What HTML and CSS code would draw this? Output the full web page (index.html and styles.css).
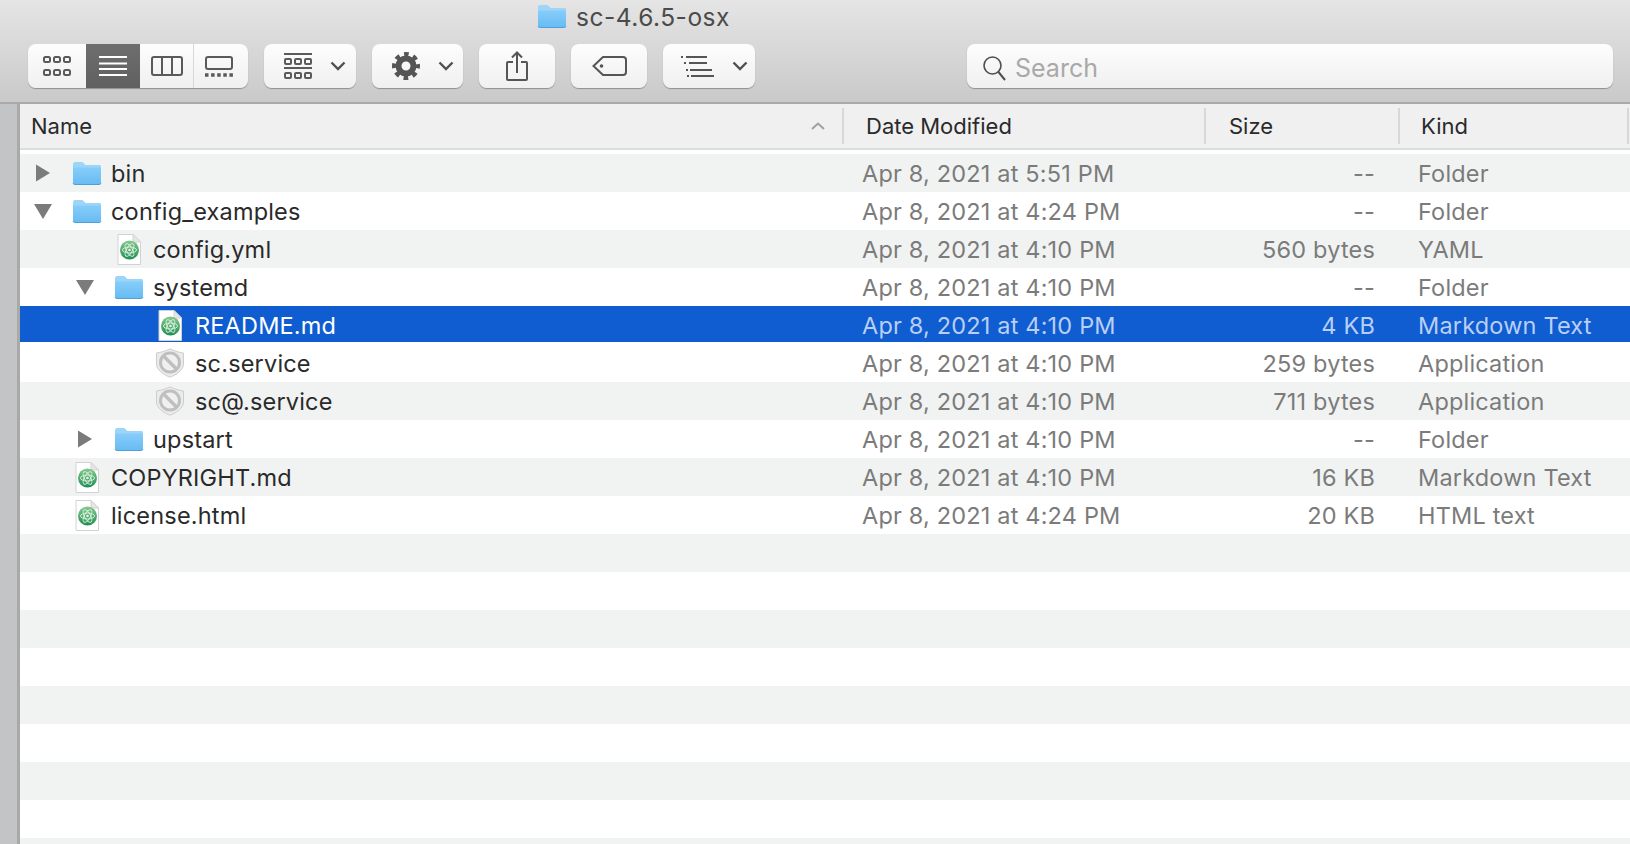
FILE: index.html
```html
<!DOCTYPE html>
<html lang="en">
  <head>
    <meta charset="UTF-8" />
    <meta name="viewport" content="width=device-width, initial-scale=1.0" />
    <title>sc-4.6.5-osx</title>
    <link rel="stylesheet" href="styles.css">
  </head>
  <body>
    <!-- shared icons -->
    <svg class="defs" width="0" height="0">
      <defs>
        <linearGradient id="folderFill" x1="0" y1="0" x2="0" y2="1">
          <stop offset="0" stop-color="#86cdf9" />
          <stop offset="1" stop-color="#67bbf3" />
        </linearGradient>
        <linearGradient id="atomFill" x1="0" y1="0" x2="0" y2="1">
          <stop offset="0" stop-color="#86c98c" />
          <stop offset="1" stop-color="#1f8f55" />
        </linearGradient>
        <symbol id="folder" viewBox="0 0 30 24">
          <path d="M1 3.500C1 2 1.800 1 3 1h6.500c1 0 1.500.4 2.200 1.200L13.500 4H27.500C28.500 4 29 4.600 29 5.500V8H1Z" fill="#9dd5f8" />
          <path d="M1 6.500H29V21.500C29 22.700 28.300 23.500 27 23.500H3C1.700 23.500 1 22.700 1 21.500Z" fill="url(#folderFill)" />
          <path d="M1 22.300C1.200 23 1.900 23.500 3 23.500H27C28.100 23.500 28.800 23 29 22.300" fill="none" stroke="#4f9fd8" stroke-width="1" />
        </symbol>
        <symbol id="doc" viewBox="0 0 24 31">
          <path d="M1 .5H16L23.500 8V30.500H1Z" fill="#fff" stroke="#d2d2d2" />
          <path d="M16 .5V8H23.500Z" fill="#e6e6e6" stroke="#d2d2d2" />
          <circle cx="12.500" cy="16" r="9.500" fill="url(#atomFill)" />
          <g fill="none" stroke="#d8f0dc" stroke-width="1">
            <ellipse cx="12.500" cy="16" rx="7" ry="3" transform="rotate(60 12.500 16)" />
            <ellipse cx="12.500" cy="16" rx="7" ry="3" transform="rotate(-60 12.500 16)" />
            <ellipse cx="12.500" cy="16" rx="7" ry="3" />
          </g>
          <circle cx="12.500" cy="16" r="1.300" fill="#e8f6ea" />
        </symbol>
        <symbol id="blocked" viewBox="0 0 30 30">
          <path d="M15 .8C18 2.500 23 4.300 28.500 5V16C28.500 22 21 27 15 29.200C9 27 1.500 22 1.500 16V5C7 4.300 12 2.500 15 .8Z" fill="#ebebeb" stroke="#cdcdcd" />
          <circle cx="15" cy="14.500" r="9.500" fill="#f0f0f0" stroke="#bfbfbf" stroke-width="3" />
          <path d="M8.500 8L21.500 21" stroke="#bfbfbf" stroke-width="3.500" />
        </symbol>
        <symbol id="tri-right" viewBox="0 0 18 18">
          <path d="M2 0.500L16 9L2 17.500Z" fill="#7b7b7b" />
        </symbol>
        <symbol id="tri-down" viewBox="0 0 18 18">
          <path d="M0 2H18L9 17Z" fill="#7b7b7b" />
        </symbol>
        <symbol id="chevron" viewBox="0 0 16 10">
          <path d="M1.500 1.500L8 8L14.500 1.500" fill="none" stroke="#505050" stroke-width="2.400" />
        </symbol>
      </defs>
    </svg>

    <div class="window">
      <header class="toolbar">
        <div class="title">
          <svg class="folder"><use href="#folder" /></svg>
          <span>sc-4.6.5-osx</span>
        </div>
        <div class="tools">
          <div class="btn-group">
            <div class="seg seg-icons">
              <svg width="28" height="20" fill="none" stroke="#5a5a5a" stroke-width="2">
                <rect x="1" y="1" width="6" height="5" rx="1.500" /><rect x="11" y="1" width="6" height="5" rx="1.500" /><rect x="21" y="1" width="6" height="5" rx="1.500" />
                <rect x="1" y="14" width="6" height="5" rx="1.500" /><rect x="11" y="14" width="6" height="5" rx="1.500" /><rect x="21" y="14" width="6" height="5" rx="1.500" />
              </svg>
            </div>
            <div class="seg seg-list">
              <svg width="28" height="20" fill="none" stroke="#fff" stroke-width="2">
                <path d="M0 1H28M0 7.500H28M0 13H28M0 19H28" />
              </svg>
            </div>
            <div class="seg seg-columns">
              <svg width="32" height="20" fill="none" stroke="#5a5a5a" stroke-width="2">
                <rect x="1" y="1" width="30" height="18" rx="2" />
                <path d="M11 1V19M21 1V19" />
              </svg>
            </div>
            <div class="seg seg-gallery">
              <svg width="28" height="21" fill="none" stroke="#5a5a5a" stroke-width="2">
                <rect x="1" y="1" width="26" height="12" rx="2" />
                <path d="M0 19H28" stroke-width="3.500" stroke-dasharray="3.500 2.600" />
              </svg>
            </div>
          </div>

          <div class="btn btn-group-by">
            <svg width="28" height="26" fill="none" stroke="#5a5a5a" stroke-width="2">
              <path d="M0 1H28M0 15H28" />
              <rect x="1" y="6" width="6" height="5" rx="1" /><rect x="11" y="6" width="6" height="5" rx="1" /><rect x="21" y="6" width="6" height="5" rx="1" />
              <rect x="1" y="20" width="6" height="5" rx="1" /><rect x="11" y="20" width="6" height="5" rx="1" /><rect x="21" y="20" width="6" height="5" rx="1" />
            </svg>
            <svg class="chevron"><use href="#chevron" /></svg>
          </div>

          <div class="btn btn-action">
            <svg width="28" height="28" fill="none" stroke="#555">
              <circle cx="14" cy="14" r="7.500" stroke-width="6" />
              <circle cx="14" cy="14" r="11.500" stroke-width="5" stroke-dasharray="4.520 4.510" stroke-dashoffset="2.260" />
            </svg>
            <svg class="chevron"><use href="#chevron" /></svg>
          </div>

          <div class="btn btn-share">
            <svg width="22" height="30" fill="none" stroke="#555" stroke-width="2">
              <path d="M7 11H2C1.400 11 1 11.400 1 12V28C1 28.600 1.400 29 2 29H20C20.600 29 21 28.600 21 28V12C21 11.400 20.600 11 20 11H15" />
              <path d="M11 22V1.500M6 6.500L11 1.500L16 6.500" />
            </svg>
          </div>

          <div class="btn btn-tag">
            <svg width="35" height="20" fill="none" stroke="#555" stroke-width="2">
              <path d="M11 1H31C33 1 34 2 34 4V16C34 18 33 19 31 19H11L1.500 10Z" />
              <circle cx="9.500" cy="10" r="1.800" fill="#555" stroke="none" />
            </svg>
          </div>

          <div class="btn btn-arrange">
            <svg width="33" height="21" fill="none" stroke="#555" stroke-width="2">
              <path d="M0 1H2M5 1H26M3 7H5M8 7H26M5 14H7M9 14H31M6 20H8M10 20H33" />
            </svg>
            <svg class="chevron"><use href="#chevron" /></svg>
          </div>

          <div class="search">
            <svg width="24" height="28" fill="none" stroke="#4d4d4d" stroke-width="1.600">
              <circle cx="10.500" cy="11.500" r="8.500" />
              <path d="M16.500 18L23 26" stroke-width="2" />
            </svg>
            <span>Search</span>
          </div>
        </div>
      </header>

      <div class="content">
        <aside class="sidebar-edge"></aside>
        <main class="listing">
          <div class="col-header">
            <div class="hd hd-name">Name
              <svg class="sort" width="14" height="8" fill="none" stroke="#a0a0a0" stroke-width="2"><path d="M1 7L7 1.500L13 7" /></svg>
            </div>
            <div class="hd hd-date">Date Modified</div>
            <div class="hd hd-size">Size</div>
            <div class="hd hd-kind">Kind</div>
          </div>

          <div class="rows">
            <div class="row">
              <div class="c-name lvl-0"><svg class="tri"><use href="#tri-right" /></svg><span class="icon-box"><svg class="folder"><use href="#folder" /></svg></span>bin</div>
              <div class="c-date">Apr 8, 2021 at 5:51 PM</div><div class="c-size">--</div><div class="c-kind">Folder</div>
            </div>
            <div class="row">
              <div class="c-name lvl-0"><svg class="tri"><use href="#tri-down" /></svg><span class="icon-box"><svg class="folder"><use href="#folder" /></svg></span>config_examples</div>
              <div class="c-date">Apr 8, 2021 at 4:24 PM</div><div class="c-size">--</div><div class="c-kind">Folder</div>
            </div>
            <div class="row">
              <div class="c-name lvl-1"><span class="tri"></span><span class="icon-box"><svg class="doc"><use href="#doc" /></svg></span>config.yml</div>
              <div class="c-date">Apr 8, 2021 at 4:10 PM</div><div class="c-size">560 bytes</div><div class="c-kind">YAML</div>
            </div>
            <div class="row">
              <div class="c-name lvl-1"><svg class="tri"><use href="#tri-down" /></svg><span class="icon-box"><svg class="folder"><use href="#folder" /></svg></span>systemd</div>
              <div class="c-date">Apr 8, 2021 at 4:10 PM</div><div class="c-size">--</div><div class="c-kind">Folder</div>
            </div>
            <div class="row selected">
              <div class="c-name lvl-2"><span class="tri"></span><span class="icon-box"><svg class="doc"><use href="#doc" /></svg></span>README.md</div>
              <div class="c-date">Apr 8, 2021 at 4:10 PM</div><div class="c-size">4 KB</div><div class="c-kind">Markdown Text</div>
            </div>
            <div class="row">
              <div class="c-name lvl-2"><span class="tri"></span><span class="icon-box"><svg class="shield"><use href="#blocked" /></svg></span>sc.service</div>
              <div class="c-date">Apr 8, 2021 at 4:10 PM</div><div class="c-size">259 bytes</div><div class="c-kind">Application</div>
            </div>
            <div class="row">
              <div class="c-name lvl-2"><span class="tri"></span><span class="icon-box"><svg class="shield"><use href="#blocked" /></svg></span>sc@.service</div>
              <div class="c-date">Apr 8, 2021 at 4:10 PM</div><div class="c-size">711 bytes</div><div class="c-kind">Application</div>
            </div>
            <div class="row">
              <div class="c-name lvl-1"><svg class="tri"><use href="#tri-right" /></svg><span class="icon-box"><svg class="folder"><use href="#folder" /></svg></span>upstart</div>
              <div class="c-date">Apr 8, 2021 at 4:10 PM</div><div class="c-size">--</div><div class="c-kind">Folder</div>
            </div>
            <div class="row">
              <div class="c-name lvl-0"><span class="tri"></span><span class="icon-box"><svg class="doc"><use href="#doc" /></svg></span>COPYRIGHT.md</div>
              <div class="c-date">Apr 8, 2021 at 4:10 PM</div><div class="c-size">16 KB</div><div class="c-kind">Markdown Text</div>
            </div>
            <div class="row">
              <div class="c-name lvl-0"><span class="tri"></span><span class="icon-box"><svg class="doc"><use href="#doc" /></svg></span>license.html</div>
              <div class="c-date">Apr 8, 2021 at 4:24 PM</div><div class="c-size">20 KB</div><div class="c-kind">HTML text</div>
            </div>
            <div class="row"></div>
            <div class="row"></div>
            <div class="row"></div>
            <div class="row"></div>
            <div class="row"></div>
            <div class="row"></div>
            <div class="row"></div>
            <div class="row"></div>
            <div class="row"></div>
          </div>
        </main>
      </div>
    </div>
  </body>
</html>
```

FILE: styles.css
```css
body {
  margin: 0;
  font-family: Inter, "Liberation Sans", sans-serif;
  background-color: #ffffff;
  overflow: hidden;
}

.defs {
  display: block;
  height: 0;
}

.window {
  height: 844px;
  display: flex;
  flex-direction: column;
  overflow: hidden;
}

/* toolbar */
.toolbar {
  height: 102px;
  background: linear-gradient(#e5e5e5, #c9c9c9);
  border-bottom: 2px solid #a9a9a9;
  flex-shrink: 0;
}

.title {
  height: 44px;
  display: flex;
  align-items: flex-start;
  padding-left: 537px;
  gap: 9px;
  font-size: 24.5px;
  letter-spacing: 0.5px;
  color: #4b4b4b;
}

.title span {
  margin-top: 1px;
  line-height: 32px;
}

.title .folder {
  margin-top: 4px;
}

.folder {
  width: 30px;
  height: 24px;
  display: block;
}

.tools {
  display: flex;
  align-items: stretch;
  gap: 16px;
  height: 44px;
  padding-left: 28px;
}

.btn,
.btn-group,
.search {
  background: linear-gradient(#fdfdfd, #f0f0f0);
  border-radius: 8px;
  box-shadow: 0 1px 1px rgba(0, 0, 0, 0.3);
}

.btn {
  display: flex;
  align-items: center;
  justify-content: center;
  box-sizing: border-box;
}

.chevron {
  width: 16px;
  height: 10px;
  display: block;
}

.btn-group {
  display: flex;
  width: 220px;
  overflow: hidden;
}

.seg {
  display: flex;
  align-items: center;
  justify-content: center;
}

.seg-icons {
  width: 58px;
}

.seg-list {
  width: 54px;
  background: linear-gradient(#6e6e6e, #606060);
}

.seg-columns {
  width: 53px;
}

.seg-gallery {
  width: 55px;
  padding-right: 5px;
  box-sizing: border-box;
  border-left: 1px solid #d8d8d8;
}

.btn-group-by,
.btn-action,
.btn-arrange {
  width: 92px;
  gap: 18px;
  padding-left: 10px;
}

.btn-action {
  width: 91px;
}

.btn-share,
.btn-tag {
  width: 76px;
}

.search {
  width: 646px;
  margin-left: 196px;
  display: flex;
  align-items: center;
  gap: 9px;
  padding: 4px 0 0 15px;
  box-sizing: border-box;
  font-size: 25px;
  color: #a9a9a9;
}

/* listing */
.content {
  flex: 1;
  display: flex;
  min-height: 0;
}

.sidebar-edge {
  width: 17px;
  background-color: #c3c4c5;
  border-right: 3px solid #a9a9a9;
  flex-shrink: 0;
}

.listing {
  flex: 1;
  min-width: 0;
}

.col-header {
  height: 44px;
  display: grid;
  grid-template-columns: 822px 362px 194px 1fr;
  background-color: #f0f0f0;
  border-bottom: 2px solid #dcdcdc;
  font-size: 22px;
  color: #2a2a2a;
}

.hd {
  display: flex;
  align-items: center;
  justify-content: space-between;
  padding-left: 24px;
  position: relative;
}

.hd-name {
  padding-left: 11px;
  padding-right: 17px;
}

.hd-size {
  padding-left: 25px;
}

.hd-kind {
  padding-left: 23px;
}

.hd-date,
.hd-size,
.hd-kind {
  justify-content: flex-start;
}

/* column dividers */
.hd-date::before,
.hd-size::before,
.hd-kind::before,
.hd-kind::after {
  content: "";
  position: absolute;
  left: 0;
  top: 4px;
  bottom: 4px;
  width: 2px;
  background-color: #d8d8d8;
}

.hd-kind::after {
  left: auto;
  right: 1px;
}

.rows {
  padding-top: 4px;
}

.row {
  height: 38px;
  display: grid;
  grid-template-columns: 822px 362px 194px 1fr;
  align-items: center;
  font-size: 23.5px;
  letter-spacing: 0.18px;
  color: #7b7b7b;
}

.row:nth-child(odd) {
  background-color: #f1f3f2;
}

.c-name {
  display: flex;
  align-items: center;
  color: #2a2a2a;
}

.lvl-0 {
  padding-left: 14px;
}

.lvl-1 {
  padding-left: 56px;
}

.lvl-2 {
  padding-left: 97px;
}

.lvl-2 .icon-box {
  margin-right: 10px;
}

.tri {
  width: 18px;
  height: 18px;
  margin-right: 20px;
  flex-shrink: 0;
}

.icon-box {
  width: 30px;
  margin-right: 9px;
  display: flex;
  justify-content: center;
  flex-shrink: 0;
}

.doc {
  width: 24px;
  height: 31px;
  display: block;
}

.shield {
  width: 30px;
  height: 30px;
  display: block;
}

.c-date {
  padding-left: 20px;
}

.c-size {
  text-align: right;
  padding-right: 23px;
}

.c-kind {
  padding-left: 20px;
}

.row.selected {
  background-color: #0f5dd0;
  box-shadow: inset 0 -2px 0 #ffffff;
  color: #b9cff5;
}

.selected .c-name {
  color: #ffffff;
}
```
